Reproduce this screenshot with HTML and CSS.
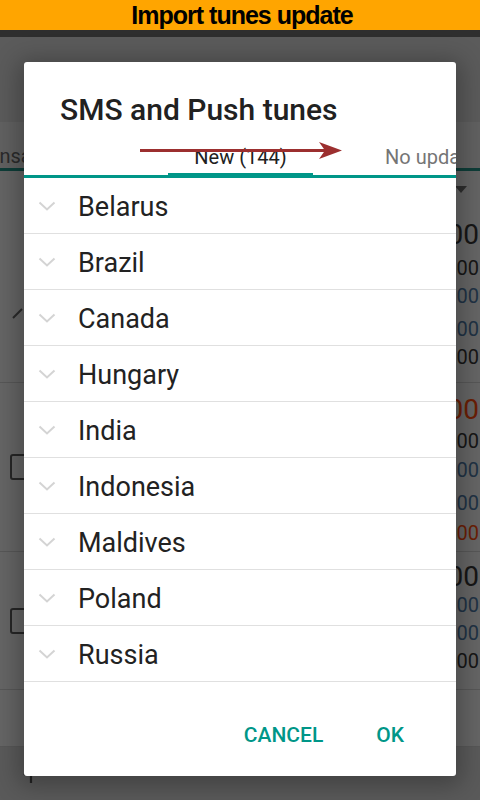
FILE: index.html
```html
<!DOCTYPE html>
<html>
<head>
<meta charset="utf-8">
<link rel="stylesheet" href="styles.css">
</head>
<body>
<div class="app">
  <header class="banner">Import tunes update</header>
  <div class="statusbar"></div>
  <div class="toolbar"></div>
  <div class="bg-tabs"><span class="bg-tab">Transactions</span></div>
  <div class="bg-filter"><span class="triangle"></span></div>
  <div class="bg-row r1">
    <div class="mark"><svg width="12" height="12" viewBox="0 0 12 12"><path d="M1 11 L10 2" stroke="#2a2a2a" stroke-width="2"/></svg></div>
    <div class="nums">
      <div class="n big dark">0.00</div>
      <div class="n dark m4">0.00</div>
      <div class="n blue">0.00</div>
      <div class="n blue m5">0.00</div>
      <div class="n dark">0.00</div>
    </div>
  </div>
  <div class="bg-row r2">
    <span class="check c2"></span>
    <div class="nums">
      <div class="n big red">0.00</div>
      <div class="n dark m2">0.00</div>
      <div class="n blue m1">0.00</div>
      <div class="n blue m5">0.00</div>
      <div class="n red m2">0.00</div>
    </div>
  </div>
  <div class="bg-row r3">
    <span class="check c3"></span>
    <div class="nums">
      <div class="n big dark">0.00</div>
      <div class="n blue mn1">0.00</div>
      <div class="n blue">0.00</div>
      <div class="n dark">0.00</div>
    </div>
  </div>
  <div class="bg-row r4"></div>
  <div class="bottombar">
    <svg class="up" width="24" height="24" viewBox="0 0 24 24"><path d="M12 20 V5 M5 12 L12 5 L19 12" fill="none" stroke="#222" stroke-width="2.2"/></svg>
  </div>
</div>

<div class="dialog">
  <h1 class="title">SMS and Push tunes</h1>
  <div class="tabs">
    <div class="tab active">New (144)</div>
    <div class="tab">No updates</div>
  </div>
  <ul class="list">
    <li class="item"><svg class="chev" width="18" height="10" viewBox="0 0 18 10"><path d="M1.5 1.5 L9 8.5 L16.5 1.5" fill="none" stroke="#d4d4d4" stroke-width="2"/></svg><span>Belarus</span></li>
    <li class="item"><svg class="chev" width="18" height="10" viewBox="0 0 18 10"><path d="M1.5 1.5 L9 8.5 L16.5 1.5" fill="none" stroke="#d4d4d4" stroke-width="2"/></svg><span>Brazil</span></li>
    <li class="item"><svg class="chev" width="18" height="10" viewBox="0 0 18 10"><path d="M1.5 1.5 L9 8.5 L16.5 1.5" fill="none" stroke="#d4d4d4" stroke-width="2"/></svg><span>Canada</span></li>
    <li class="item"><svg class="chev" width="18" height="10" viewBox="0 0 18 10"><path d="M1.5 1.5 L9 8.5 L16.5 1.5" fill="none" stroke="#d4d4d4" stroke-width="2"/></svg><span>Hungary</span></li>
    <li class="item"><svg class="chev" width="18" height="10" viewBox="0 0 18 10"><path d="M1.5 1.5 L9 8.5 L16.5 1.5" fill="none" stroke="#d4d4d4" stroke-width="2"/></svg><span>India</span></li>
    <li class="item"><svg class="chev" width="18" height="10" viewBox="0 0 18 10"><path d="M1.5 1.5 L9 8.5 L16.5 1.5" fill="none" stroke="#d4d4d4" stroke-width="2"/></svg><span>Indonesia</span></li>
    <li class="item"><svg class="chev" width="18" height="10" viewBox="0 0 18 10"><path d="M1.5 1.5 L9 8.5 L16.5 1.5" fill="none" stroke="#d4d4d4" stroke-width="2"/></svg><span>Maldives</span></li>
    <li class="item"><svg class="chev" width="18" height="10" viewBox="0 0 18 10"><path d="M1.5 1.5 L9 8.5 L16.5 1.5" fill="none" stroke="#d4d4d4" stroke-width="2"/></svg><span>Poland</span></li>
    <li class="item"><svg class="chev" width="18" height="10" viewBox="0 0 18 10"><path d="M1.5 1.5 L9 8.5 L16.5 1.5" fill="none" stroke="#d4d4d4" stroke-width="2"/></svg><span>Russia</span></li>
  </ul>
  <div class="actions">
    <button class="btn">CANCEL</button>
    <button class="btn">OK</button>
  </div>
</div>

<svg class="annot" width="480" height="800" viewBox="0 0 480 800">
  <path d="M140 150.5 H326" stroke="#9c2f2f" stroke-width="3"/>
  <path d="M319 142 L342 150.5 L319 159 L325 150.5 Z" fill="#9c2f2f"/>
</svg>
</body>
</html>
```

FILE: styles.css
```css
* { box-sizing: border-box; }
html, body { margin: 0; padding: 0; }
body {
  width: 480px;
  height: 800px;
  overflow: hidden;
  background: #5a5a5a;
  font-family: Roboto, "Noto Sans", sans-serif;
  position: relative;
}
.app { display: flex; flex-direction: column; height: 800px; }
.banner {
  height: 30px;
  background: #ffa500;
  color: #000;
  font-family: "Liberation Sans", Arial, sans-serif;
  font-weight: bold;
  font-size: 25px;
  letter-spacing: -1px;
  line-height: 31px;
  text-align: center;
  padding-left: 4px;
}
.statusbar { height: 7px; background: #2e2e2e; }
.toolbar { height: 85px; background: #5b5b5b; }
.bg-tabs {
  height: 49px;
  background: #616161;
  border-bottom: 3px solid #0e3d38;
  padding-top: 22px;
  overflow: hidden;
  white-space: nowrap;
}
.bg-tab { margin-left: -29px; font-size: 20px; color: #2b2b2b; line-height: 24px; }
.bg-filter {
  height: 29px;
  background: #646464;
  display: flex;
  justify-content: flex-end;
  padding: 15px 13px 0 0;
}
.triangle {
  width: 0; height: 0;
  border-left: 6px solid transparent;
  border-right: 6px solid transparent;
  border-top: 7px solid #2e2e2e;
}
.bg-row {
  display: flex;
  justify-content: space-between;
  background: #656565;
  border-bottom: 1px solid #575757;
  position: relative;
}
.r1 { height: 183px; padding-top: 20px; }
.r2 { height: 169px; padding-top: 12px; }
.r3 { height: 138px; padding-top: 10px; }
.r4 { height: 57px; }
.mark { padding: 84px 0 0 12px; }
.check {
  width: 22px; height: 26px;
  border: 2.5px solid #262626;
  border-radius: 3px;
  margin-left: 10px;
}
.c2 { margin-top: 59px; }
.c3 { margin-top: 46px; }
.nums { text-align: right; padding-right: 1px; font-family: Roboto, sans-serif; }
.n { font-size: 20px; line-height: 28px; }
.n.big { font-size: 28px; line-height: 30px; }
.m1 { margin-top: 1px; }
.m2 { margin-top: 2px; }
.m4 { margin-top: 4px; }
.m5 { margin-top: 5px; }
.mn1 { margin-top: -1px; }
.dark { color: #161616; }
.blue { color: #1f3244; }
.red { color: #6a1e05; }
.bottombar { flex: 1; background: #5a5a5a; padding: 16px 0 0 19px; }

.dialog {
  position: absolute;
  left: 24px;
  top: 62px;
  width: 432px;
  height: 714px;
  background: #fff;
  border-radius: 3px;
  box-shadow: 0 4px 24px 6px rgba(0,0,0,0.28);
  display: flex;
  flex-direction: column;
  overflow: hidden;
}
.title {
  margin: 0;
  height: 68px;
  padding: 31px 0 0 36px;
  font-size: 30px;
  line-height: 34px;
  font-weight: 500;
  color: #212121;
}
.tabs {
  height: 48px;
  display: flex;
  border-bottom: 3px solid #009688;
  white-space: nowrap;
  padding-top: 12px;
}
.tab {
  font-size: 20px;
  line-height: 30px;
  color: #757575;
  text-align: center;
  flex: none;
  position: relative;
}
.tab.active {
  margin-left: 144px;
  width: 145px;
  color: #212121;
}
.tab.active::after {
  content: "";
  position: absolute;
  left: 0; right: 0;
  top: 31px;
  height: 5px;
  background: #009688;
}
.tab + .tab { margin-left: 72px; }
.list { list-style: none; margin: 0; padding: 0; }
.item {
  height: 56px;
  border-bottom: 1px solid #e0e0e0;
  display: flex;
  align-items: center;
  padding-left: 14px;
  gap: 22px;
  font-size: 27px;
  color: #222;
  padding-top: 3px;
}
.chev { flex: none; margin-top: -2px; }
.actions {
  flex: 1;
  display: flex;
  justify-content: flex-end;
  align-items: center;
  gap: 53px;
  padding: 12px 52px 0 0;
}
.btn {
  border: none;
  background: none;
  padding: 0;
  font-family: Roboto, sans-serif;
  font-size: 21px;
  font-weight: 500;
  color: #009688;
}
.annot { position: absolute; left: 0; top: 0; pointer-events: none; }
```
